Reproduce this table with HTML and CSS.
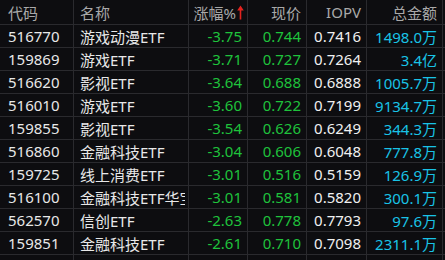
FILE: index.html
```html
<!DOCTYPE html>
<html lang="zh">
<head>
<meta charset="utf-8">
<link rel="stylesheet" href="styles.css">
</head>
<body>
<div class="grid">
  <div class="row head">
    <div class="c code">代码</div>
    <div class="c name"><span class="clip">名称</span></div>
    <div class="c r chg">涨幅%<svg class="arrow" width="7" height="15" viewBox="0 0 7 15"><path d="M3.5 0.5 L6.8 5.5 L4.3 5.5 L4.3 14.5 L2.7 14.5 L2.7 5.5 L0.2 5.5 Z" fill="#e3231e"/></svg></div>
    <div class="c r">现价</div>
    <div class="c r">IOPV</div>
    <div class="c r">总金额</div>
    <div class="c last"></div>
  </div>
  <div class="row"><div class="c code">516770</div><div class="c name"><span class="clip">游戏动漫ETF</span></div><div class="c r g">-3.75</div><div class="c r g">0.744</div><div class="c r w">0.7416</div><div class="c r b">1498.0万</div><div class="c last"></div></div>
  <div class="row"><div class="c code">159869</div><div class="c name"><span class="clip">游戏ETF</span></div><div class="c r g">-3.71</div><div class="c r g">0.727</div><div class="c r w">0.7264</div><div class="c r b">3.4亿</div><div class="c last"></div></div>
  <div class="row"><div class="c code">516620</div><div class="c name"><span class="clip">影视ETF</span></div><div class="c r g">-3.64</div><div class="c r g">0.688</div><div class="c r w">0.6888</div><div class="c r b">1005.7万</div><div class="c last"></div></div>
  <div class="row"><div class="c code">516010</div><div class="c name"><span class="clip">游戏ETF</span></div><div class="c r g">-3.60</div><div class="c r g">0.722</div><div class="c r w">0.7199</div><div class="c r b">9134.7万</div><div class="c last"></div></div>
  <div class="row"><div class="c code">159855</div><div class="c name"><span class="clip">影视ETF</span></div><div class="c r g">-3.54</div><div class="c r g">0.626</div><div class="c r w">0.6249</div><div class="c r b">344.3万</div><div class="c last"></div></div>
  <div class="row"><div class="c code">516860</div><div class="c name"><span class="clip">金融科技ETF</span></div><div class="c r g">-3.04</div><div class="c r g">0.606</div><div class="c r w">0.6048</div><div class="c r b">777.8万</div><div class="c last"></div></div>
  <div class="row"><div class="c code">159725</div><div class="c name"><span class="clip">线上消费ETF</span></div><div class="c r g">-3.01</div><div class="c r g">0.516</div><div class="c r w">0.5159</div><div class="c r b">126.9万</div><div class="c last"></div></div>
  <div class="row"><div class="c code">516100</div><div class="c name"><span class="clip">金融科技ETF华宝</span></div><div class="c r g">-3.01</div><div class="c r g">0.581</div><div class="c r w">0.5820</div><div class="c r b">300.1万</div><div class="c last"></div></div>
  <div class="row"><div class="c code">562570</div><div class="c name"><span class="clip">信创ETF</span></div><div class="c r g">-2.63</div><div class="c r g">0.778</div><div class="c r w">0.7793</div><div class="c r b">97.6万</div><div class="c last"></div></div>
  <div class="row"><div class="c code">159851</div><div class="c name"><span class="clip">金融科技ETF</span></div><div class="c r g">-2.61</div><div class="c r g">0.710</div><div class="c r w">0.7098</div><div class="c r b">2311.1万</div><div class="c last"></div></div>
  <div class="row"><div class="c code"></div><div class="c name"></div><div class="c r"></div><div class="c r"></div><div class="c r"></div><div class="c r"></div><div class="c last"></div></div>
</div>
</body>
</html>
```
FILE: styles.css
```css
html, body {
  margin: 0;
  padding: 0;
  background: #0d0d10;
  overflow: hidden;
}
.grid {
  width: 445px;
  font-family: "Noto Sans", "Noto Sans CJK SC", sans-serif;
  font-size: 15px;
  color: #e8e8e8;
}
.row {
  display: grid;
  grid-template-columns: 74px 115px 59px 59px 60px 76px 1fr;
  height: 23px;
}
.row.head {
  height: 25px;
  color: #a9a9a9;
}
.c {
  box-sizing: border-box;
  border-right: 1px solid #2a2a2e;
  border-bottom: 1px solid #2a2a2e;
  display: flex;
  align-items: center;
  white-space: nowrap;
  overflow: hidden;
  padding-right: 5px;
}
.code {
  padding-left: 8px;
}
.name {
  padding-left: 6px;
  padding-right: 3px;
}
.clip {
  display: block;
  overflow: hidden;
  width: 100%;
}
.r {
  justify-content: flex-end;
}
.chg {
  padding-right: 3px;
}
.arrow {
  margin-left: 1px;
  flex: none;
}
.last {
  border-right: none;
  padding: 0;
}
.g { color: #1fc23c; }
.w { color: #f0f0f0; }
.b { color: #19c3e6; }
```
